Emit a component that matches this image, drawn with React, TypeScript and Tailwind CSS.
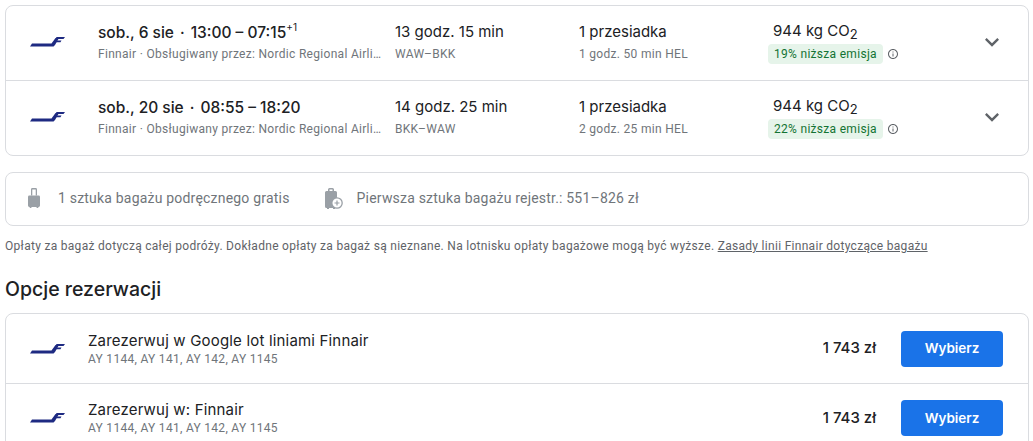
const titleFont = "font-['Inter','Noto_Sans',sans-serif]";

function FinnairLogo() {
  return (
    <svg width="35" height="10" viewBox="0 0 35 10" className="shrink-0">
      <path d="M0 9.500 L2 6.500 L21.500 6.500 L25.500 1 L29 1 L25 8 L23.500 9.500 Z" fill="#1e2a82" />
      <path d="M26 0 L35 0 L33.500 2 L27 2 Z" fill="#1e2a82" />
      <path d="M25 3.500 L31.500 3.500 L30.500 5.300 L24.500 5.300 Z" fill="#1e2a82" />
    </svg>
  );
}

function Chevron() {
  return (
    <svg width="28" height="28" viewBox="0 0 24 24" fill="#5f6368" className="shrink-0">
      <path d="M16.590 8.590 12 13.170 7.410 8.590 6 10l6 6 6-6z" />
    </svg>
  );
}

function InfoIcon() {
  return (
    <svg width="12" height="12" viewBox="0 0 24 24" fill="#5f6368">
      <path d="M11 7h2v2h-2zm0 4h2v6h-2zm1-9C6.480 2 2 6.480 2 12s4.480 10 10 10 10-4.480 10-10S17.520 2 12 2zm0 18c-4.410 0-8-3.590-8-8s3.590-8 8-8 8 3.590 8 8-3.590 8-8 8z" />
    </svg>
  );
}

function CarryOnIcon() {
  return (
    <svg width="12" height="20" viewBox="0 0 14 21" preserveAspectRatio="none" fill="#9aa0a6">
      <path d="M3.500 1.500A1.500 1.500 0 0 1 5 0h4a1.500 1.500 0 0 1 1.500 1.500V8H9V1.500H5V8H3.500z" />
      <path d="M1.500 8h11A1.500 1.500 0 0 1 14 9.500v9a1.500 1.500 0 0 1-1.500 1.500H12v1h-2v-1H4v1H2v-1h-.5A1.500 1.500 0 0 1 0 18.500v-9A1.500 1.500 0 0 1 1.500 8z" />
    </svg>
  );
}

function CheckedBagIcon() {
  return (
    <svg width="18" height="21" viewBox="0 0 18 21" className="overflow-visible">
      <path d="M4 3V1.500A1.500 1.500 0 0 1 5.500 0h3A1.500 1.500 0 0 1 10 1.500V3h1.500A1.500 1.500 0 0 1 13 4.500v14a1.500 1.500 0 0 1-1.500 1.500H11v1H9v-1H5v1H3v-1h-.5A1.500 1.500 0 0 1 1 18.500v-14A1.500 1.500 0 0 1 2.500 3zm1.500 0h3V1.500h-3z" fill="#9aa0a6" transform="translate(-1 0)" />
      <circle cx="12" cy="15" r="5.200" fill="#ffffff" stroke="#9aa0a6" strokeWidth="1.300" />
      <path d="M11.400 12.500h1.200v1.900h1.900v1.200h-1.900v1.900h-1.200v-1.900H9.500v-1.200h1.900z" fill="#9aa0a6" />
    </svg>
  );
}

const flights = [
  { date: 'sob., 6 sie', times: '13:00 – 07:15', plus: '+1', duration: '13 godz. 15 min', route: 'WAW–BKK', stop: '1 godz. 50 min HEL', emission: '19% niższa emisja' },
  { date: 'sob., 20 sie', times: '08:55 – 18:20', plus: '', duration: '14 godz. 25 min', route: 'BKK–WAW', stop: '2 godz. 25 min HEL', emission: '22% niższa emisja' },
];

const bookings = ['Zarezerwuj w Google lot liniami Finnair', 'Zarezerwuj w: Finnair'];

export default function App() {
  return (
    <div className="h-[441px] w-[1033px] overflow-hidden bg-white pl-[5px] pr-[4px] pt-[5px] font-['Roboto',sans-serif] text-[#202124]">
      {/* Flights */}
      <div className="rounded-lg border border-[#dadce0]">
        {flights.map((f, i) => (
          <div key={f.date} className={`flex items-center pb-[3px] pl-[24px] ${i > 0 ? 'h-[75px] border-t border-[#dadce0]' : 'h-[74px]'}`}>
            <div className="w-[68px] shrink-0"><FinnairLogo /></div>
            <div className="w-[297px] shrink-0">
              <div className={`flex h-[22px] items-center whitespace-pre text-[15.500px] font-medium ${titleFont}`}>
                {f.date}<span className="px-[6px]">·</span>{f.times}
                {f.plus && <span className="relative -top-[5px] text-[10px] font-normal">{f.plus}</span>}
              </div>
              <div className="mt-[2px] w-[285px] truncate text-xs tracking-[0.3px] text-[#70757a]">
                Finnair · Obsługiwany przez: Nordic Regional Airlines
              </div>
            </div>
            <div className="w-[183px] shrink-0">
              <div className={`h-[22px] text-[15px] leading-[20px] ${titleFont}`}>{f.duration}</div>
              <div className="mt-[2px] text-xs tracking-[0.3px] text-[#70757a]">{f.route}</div>
            </div>
            <div className="w-[190px] shrink-0 pl-[1px]">
              <div className={`h-[22px] text-[15px] leading-[20px] ${titleFont}`}>1 przesiadka</div>
              <div className="mt-[2px] text-xs tracking-[0.3px] text-[#70757a]">{f.stop}</div>
            </div>
            <div className="w-[210px] shrink-0">
              <div className={`ml-[5px] h-[22px] whitespace-pre text-[15px] leading-[20px] ${titleFont}`}>
                944 kg CO<sub className="text-[13px]">2</sub>
              </div>
              <div className="-mb-[1px] mt-[1px] flex items-center">
                <span className="rounded bg-[#e6f4ea] px-[6px] py-[2px] text-xs leading-4 tracking-[0.3px] text-[#137333]">{f.emission}</span>
                <span className="ml-[4px] flex"><InfoIcon /></span>
              </div>
            </div>
            <Chevron />
          </div>
        ))}
      </div>

      {/* Baggage */}
      <div className="mt-[16px] flex h-[54px] items-center rounded-lg border border-[#dadce0] pb-[2px] pl-[22px] text-sm tracking-[0.2px] text-[#70757a]">
        <CarryOnIcon />
        <span className="ml-[18px]">1 sztuka bagażu podręcznego gratis</span>
        <span className="ml-[35px]"><CheckedBagIcon /></span>
        <span className="ml-[14px]">Pierwsza sztuka bagażu rejestr.: 551–826 zł</span>
      </div>

      <p className="mt-[12px] text-xs leading-4 tracking-[0.295px] text-[#5f6368]">
        Opłaty za bagaż dotyczą całej podróży. Dokładne opłaty za bagaż są nieznane. Na lotnisku opłaty bagażowe mogą być wyższe.{' '}
        <span className="underline">Zasady linii Finnair dotyczące bagażu</span>
      </p>

      <h2 className={`mt-[21px] h-[28px] text-[19.500px] font-medium leading-7 ${titleFont}`}>Opcje rezerwacji</h2>

      {/* Booking options */}
      <div className="mt-[10px] rounded-t-lg border border-[#dadce0]">
        {bookings.map((b, i) => (
          <div key={b} className={`flex h-[69px] items-center pl-[24px] pr-[25px] ${i > 0 ? 'border-t border-[#dadce0]' : ''}`}>
            <div className="w-[58px] shrink-0"><FinnairLogo /></div>
            <div className="flex-1">
              <div className={`text-[15px] leading-5 tracking-[0.18px] ${titleFont}`}>{b}</div>
              <div className="text-xs leading-4 tracking-[0.3px] text-[#70757a]">AY 1144, AY 141, AY 142, AY 1145</div>
            </div>
            <div className={`text-[15px] font-medium ${titleFont}`}>1 743 zł</div>
            <button className={`ml-[25px] h-9 w-[102px] rounded bg-[#1a73e8] text-[13.500px] font-semibold text-white ${titleFont}`}>Wybierz</button>
          </div>
        ))}
      </div>
    </div>
  );
}
